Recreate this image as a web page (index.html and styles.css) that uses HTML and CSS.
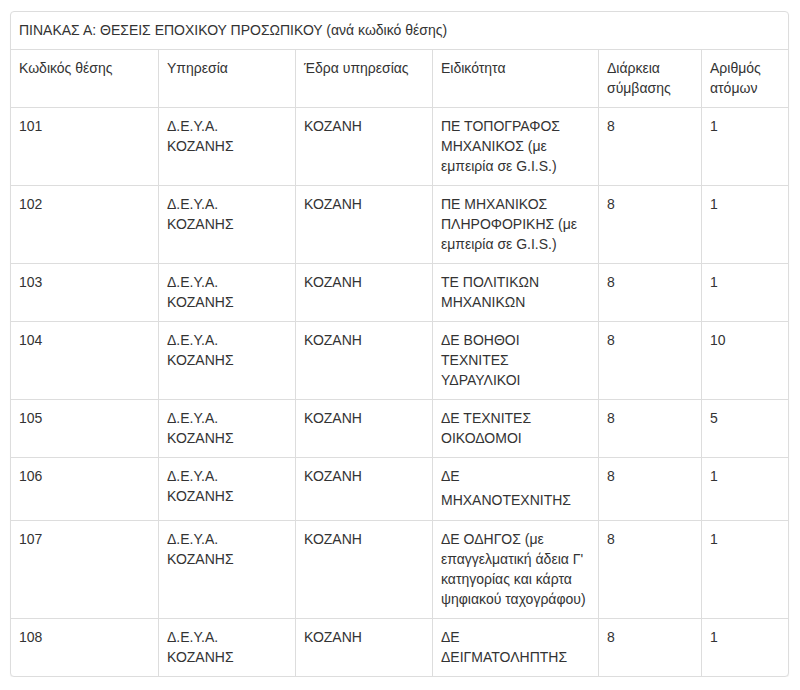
FILE: index.html
```html
<!DOCTYPE html>
<html lang="el">
<head>
<meta charset="utf-8">
<title>ΠΙΝΑΚΑΣ Α</title>
<link rel="stylesheet" href="styles.css">
</head>
<body>
<div class="page">
  <div class="panel">
    <table class="grid">
      <colgroup>
        <col class="c1"><col class="c2"><col class="c3"><col class="c4"><col class="c5"><col class="c6">
      </colgroup>
      <thead>
        <tr class="title-row"><th colspan="6">ΠΙΝΑΚΑΣ Α: ΘΕΣΕΙΣ ΕΠΟΧΙΚΟΥ ΠΡΟΣΩΠΙΚΟΥ (ανά κωδικό θέσης)</th></tr>
        <tr>
          <th>Κωδικός θέσης</th>
          <th>Υπηρεσία</th>
          <th>Έδρα υπηρεσίας</th>
          <th>Ειδικότητα</th>
          <th>Διάρκεια σύμβασης</th>
          <th>Αριθμός ατόμων</th>
        </tr>
      </thead>
      <tbody>
        <tr><td>101</td><td>Δ.Ε.Υ.Α. ΚΟΖΑΝΗΣ</td><td>ΚΟΖΑΝΗ</td><td>ΠΕ ΤΟΠΟΓΡΑΦΟΣ ΜΗΧΑΝΙΚΟΣ (με εμπειρία σε G.I.S.)</td><td>8</td><td>1</td></tr>
        <tr><td>102</td><td>Δ.Ε.Υ.Α. ΚΟΖΑΝΗΣ</td><td>ΚΟΖΑΝΗ</td><td>ΠΕ ΜΗΧΑΝΙΚΟΣ ΠΛΗΡΟΦΟΡΙΚΗΣ (με εμπειρία σε G.I.S.)</td><td>8</td><td>1</td></tr>
        <tr><td>103</td><td>Δ.Ε.Υ.Α. ΚΟΖΑΝΗΣ</td><td>ΚΟΖΑΝΗ</td><td>ΤΕ ΠΟΛΙΤΙΚΩΝ ΜΗΧΑΝΙΚΩΝ</td><td>8</td><td>1</td></tr>
        <tr><td>104</td><td>Δ.Ε.Υ.Α. ΚΟΖΑΝΗΣ</td><td>ΚΟΖΑΝΗ</td><td>ΔΕ ΒΟΗΘΟΙ ΤΕΧΝΙΤΕΣ ΥΔΡΑΥΛΙΚΟΙ</td><td>8</td><td>10</td></tr>
        <tr><td>105</td><td>Δ.Ε.Υ.Α. ΚΟΖΑΝΗΣ</td><td>ΚΟΖΑΝΗ</td><td>ΔΕ ΤΕΧΝΙΤΕΣ ΟΙΚΟΔΟΜΟΙ</td><td>8</td><td>5</td></tr>
        <tr><td>106</td><td>Δ.Ε.Υ.Α. ΚΟΖΑΝΗΣ</td><td>ΚΟΖΑΝΗ</td><td>ΔΕ <span class="spaced">ΜΗΧΑΝΟΤΕΧΝΙΤΗΣ</span></td><td>8</td><td>1</td></tr>
        <tr><td>107</td><td>Δ.Ε.Υ.Α. ΚΟΖΑΝΗΣ</td><td>ΚΟΖΑΝΗ</td><td>ΔΕ ΟΔΗΓΟΣ (με επαγγελματική άδεια Γ' κατηγορίας και κάρτα ψηφιακού ταχογράφου)</td><td>8</td><td>1</td></tr>
        <tr><td>108</td><td>Δ.Ε.Υ.Α. ΚΟΖΑΝΗΣ</td><td>ΚΟΖΑΝΗ</td><td>ΔΕ<br>ΔΕΙΓΜΑΤΟΛΗΠΤΗΣ</td><td>8</td><td>1</td></tr>
      </tbody>
    </table>
  </div>
</div>
</body>
</html>
```

FILE: styles.css
```css
html, body {
  margin: 0;
  padding: 0;
  background: #fff;
}

body {
  font-family: "Liberation Sans", Arial, Helvetica, sans-serif;
  font-size: 14px;
  line-height: 20px;
  color: #333;
}

.page {
  padding: 11px 11px 0 10px;
}

.panel {
  width: 777px;
  border: 1px solid #ddd;
  border-radius: 4px;
  background: #fff;
  box-shadow: 0 1px 1px rgba(0, 0, 0, 0.05);
  overflow: hidden;
}

.grid {
  width: 777px;
  table-layout: fixed;
  border-collapse: separate;
  border-spacing: 0;
}

.c1 { width: 148px; }
.c2 { width: 137px; }
.c3 { width: 137px; }
.c4 { width: 166px; }
.c5 { width: 103px; }
.c6 { width: 86px; }

.grid th,
.grid td {
  padding: 8px 8px 9px;
  text-align: left;
  vertical-align: top;
  font-weight: normal;
  border-right: 1px solid #ddd;
  border-bottom: 1px solid #ddd;
}

.grid th:last-child,
.grid td:last-child {
  border-right: 0;
}

.grid tbody tr:last-child td {
  border-bottom: 0;
}

.title-row th {
  border-right: 0;
}

.spaced {
  display: block;
  padding-top: 4px;
  padding-bottom: 1px;
}
```
